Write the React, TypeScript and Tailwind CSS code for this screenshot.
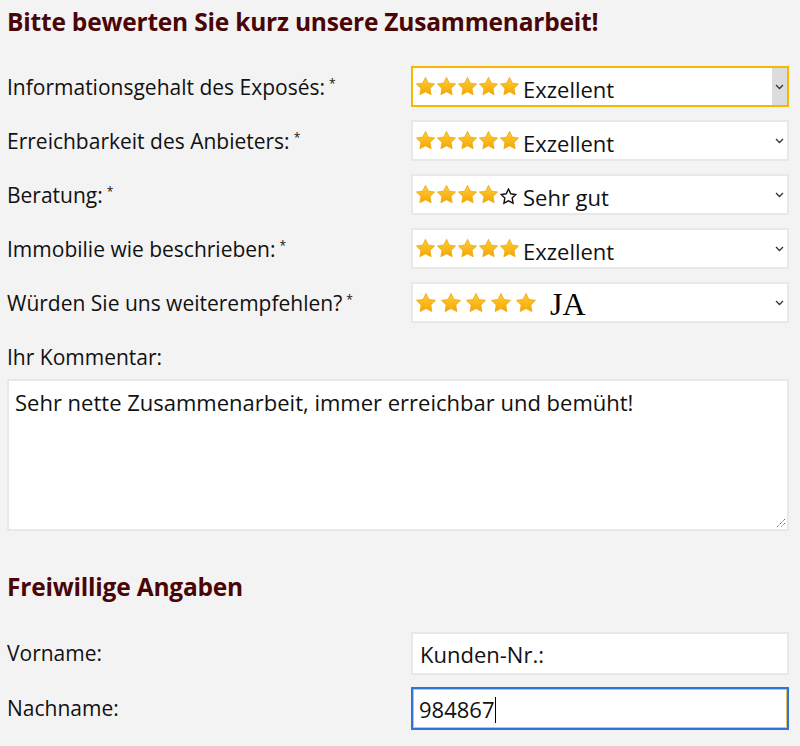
import React from "react";

const STAR = "M12 1.5l3.2 6.6 7.2 1-5.2 5.1 1.25 7.2L12 18l-6.45 3.4 1.25-7.2-5.2-5.1 7.2-1z";

function Star({ size = 21 }: { size?: number }) {
  return (
    <svg width={size} height={size} viewBox="0 0 24 24" className="shrink-0">
      <defs>
        <linearGradient id="sg" x1="0" y1="0" x2="0" y2="1">
          <stop offset="0" stopColor="#ffcd3c" />
          <stop offset="1" stopColor="#f4a700" />
        </linearGradient>
      </defs>
      <path d={STAR} fill="url(#sg)" stroke="#e9a300" strokeWidth="0.8" strokeLinejoin="round" />
    </svg>
  );
}

function OutlineStar() {
  return (
    <svg width="17" height="17" viewBox="0 0 24 24" className="ml-[1px] mt-[3px] shrink-0">
      <path d={STAR} fill="none" stroke="#111" strokeWidth="2" strokeLinejoin="miter" />
    </svg>
  );
}

function Chevron() {
  return (
    <svg width="9" height="6" viewBox="0 0 9 6">
      <path d="M1 1l3.5 3.5L8 1" fill="none" stroke="#333" strokeWidth="1.3" />
    </svg>
  );
}

function Select({
  stars,
  text,
  focused,
  outline,
  ja,
}: {
  stars: number;
  text: string;
  focused?: boolean;
  outline?: boolean;
  ja?: boolean;
}) {
  return (
    <div
      className={`flex h-[41px] items-center border-2 bg-white ${
        focused ? "border-[#f5b800]" : "border-[#e8e8e8]"
      }`}
    >
      <div className="flex flex-1 items-center pl-[2px]">
        <div className={`flex items-center ${ja ? "gap-[3px]" : "gap-0"}`}>
          {Array.from({ length: stars }).map((_, i) => (
            <Star key={i} size={ja ? 22 : 21} />
          ))}
          {outline && <OutlineStar />}
        </div>
        {ja ? (
          <span className="ml-[13px] pt-[2px] font-['Liberation_Serif',serif] text-[32px] leading-none text-black">
            JA
          </span>
        ) : (
          <span className={`${outline ? "ml-[6px]" : "ml-[3px]"} pt-[4px] text-[22px] leading-none text-[#111]`}>
            {text}
          </span>
        )}
      </div>
      <div
        className={`flex h-full w-[15px] items-center justify-center ${
          focused ? "bg-[#dcdcdc]" : ""
        }`}
      >
        <Chevron />
      </div>
    </div>
  );
}

function Row({ label, children }: { label: string; children: React.ReactNode }) {
  return (
    <div className="grid grid-cols-[404px_378px] items-center">
      <div className="pt-[3px] text-[21px] text-[#111]">
        {label}
        <span className="ml-[4px] align-[7px] text-[12px]">*</span>
      </div>
      {children}
    </div>
  );
}

export default function App() {
  return (
    <div className="min-h-[746px] bg-[#f3f3f3] pl-[7px] pr-[11px] font-['Open_Sans',sans-serif] text-[#111]">
      <h1 className="pt-[6px] text-[24.5px] font-bold leading-[32px] tracking-[-0.2px] text-[#4a0606]">
        Bitte bewerten Sie kurz unsere Zusammenarbeit!
      </h1>
      <div className="mt-[28px] flex flex-col gap-[13px]">
        <Row label="Informationsgehalt des Exposés:">
          <Select stars={5} text="Exzellent" focused />
        </Row>
        <Row label="Erreichbarkeit des Anbieters:">
          <Select stars={5} text="Exzellent" />
        </Row>
        <Row label="Beratung:">
          <Select stars={4} text="Sehr gut" outline />
        </Row>
        <Row label="Immobilie wie beschrieben:">
          <Select stars={5} text="Exzellent" />
        </Row>
        <Row label="Würden Sie uns weiterempfehlen?">
          <Select stars={5} text="JA" ja />
        </Row>
      </div>
      <div className="mt-[20px] text-[21px] leading-[28px]">Ihr Kommentar:</div>
      <div className="relative mt-[8px] h-[152px] border-2 border-[#e8e8e8] bg-white px-[6px] pt-[7px] text-[22px] leading-[28px]">
        Sehr nette Zusammenarbeit, immer erreichbar und bemüht!
        <svg
          className="absolute bottom-[1px] right-[1px]"
          width="11"
          height="11"
          viewBox="0 0 11 11"
        >
          <path d="M10 2L2 10M10 6L6 10" stroke="#555" strokeWidth="1" strokeDasharray="1.2 0.8" />
        </svg>
      </div>
      <h2 className="mt-[40px] text-[24.5px] font-bold leading-[32px] tracking-[-0.2px] text-[#4a0606]">
        Freiwillige Angaben
      </h2>
      <div className="mt-[29px] flex flex-col gap-[12px]">
        <div className="grid grid-cols-[404px_378px] items-center">
          <div className="text-[21px]">Vorname:</div>
          <div className="flex h-[43px] items-center border-2 border-[#e8e8e8] bg-white px-[7px] pt-[2px] text-[22px]">
            Kunden-Nr.:
          </div>
        </div>
        <div className="grid grid-cols-[404px_378px] items-center">
          <div className="text-[21px]">Nachname:</div>
          <div className="flex h-[43px] items-center border-2 border-[#2f74d8] bg-white px-[6px] pt-[2px] text-[22px] shadow-[inset_0_0_0_1px_#e6c36a]">
            984867
            <span className="ml-[1px] inline-block h-[26px] w-[1px] bg-black" />
          </div>
        </div>
      </div>
    </div>
  );
}
